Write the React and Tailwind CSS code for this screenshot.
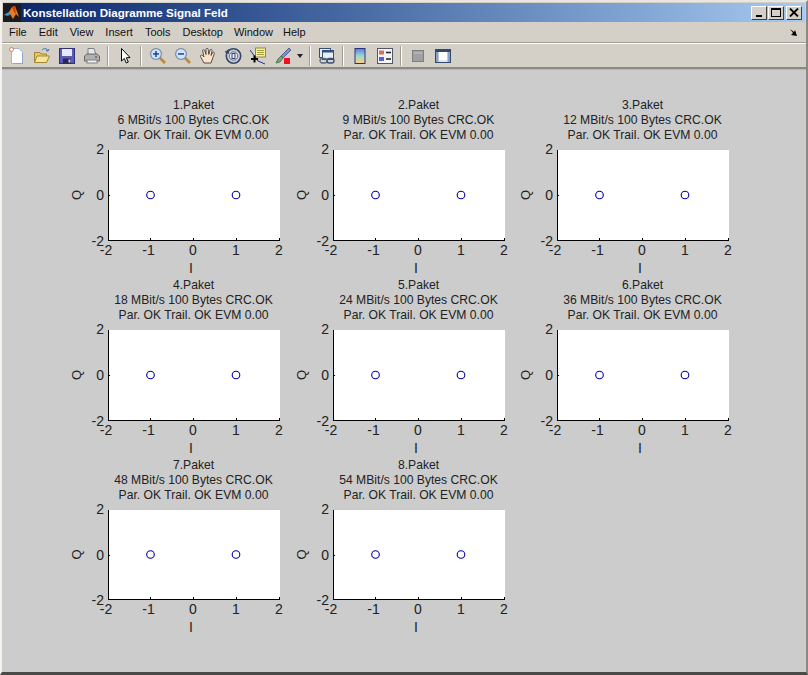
const plots = [
  ["1.Paket", "6 MBit/s 100 Bytes CRC.OK"],
  ["2.Paket", "9 MBit/s 100 Bytes CRC.OK"],
  ["3.Paket", "12 MBit/s 100 Bytes CRC.OK"],
  ["4.Paket", "18 MBit/s 100 Bytes CRC.OK"],
  ["5.Paket", "24 MBit/s 100 Bytes CRC.OK"],
  ["6.Paket", "36 MBit/s 100 Bytes CRC.OK"],
  ["7.Paket", "48 MBit/s 100 Bytes CRC.OK"],
  ["8.Paket", "54 MBit/s 100 Bytes CRC.OK"],
];

function Axes({ h }) {
  const top = 7;
  const bottom = top + h;
  const mid = top + h / 2;
  const left = 38;
  const xTicks = [
    [left, "-2", left - 2],
    [left + 42.5, "-1", left + 40.5],
    [left + 85, "0", left + 85],
    [left + 128, "1", left + 128],
    [left + 171, "2", left + 171],
  ];
  const tick = { stroke: "#000", strokeWidth: 1, shapeRendering: "crispEdges" };
  const txt = { fontFamily: "'Liberation Sans', Arial, sans-serif", fontSize: 14, fill: "#222" };
  return (
    <svg width="224" height="135" className="block overflow-visible">
      <rect x={left + 1} y={top} width="171" height={h} fill="#fff" />
      <line x1={left + 0.5} y1={top} x2={left + 0.5} y2={bottom + 0.5} {...tick} />
      <line x1={left} y1={bottom + 0.5} x2={left + 172} y2={bottom + 0.5} {...tick} />
      <line x1={left} y1={mid + 0.5} x2={left + 2} y2={mid + 0.5} {...tick} />
      {xTicks.map(([x]) => (
        <line key={x} x1={Math.floor(x) + 0.5} y1={bottom} x2={Math.floor(x) + 0.5} y2={bottom - 2} {...tick} />
      ))}
      {xTicks.map(([x, t, tx]) => (
        <text key={t} x={tx} y={bottom + 15} textAnchor="middle" {...txt}>{t}</text>
      ))}
      <text x={left - 4} y={top + 4} textAnchor="end" {...txt}>2</text>
      <text x={left - 4} y={mid + 5} textAnchor="end" {...txt}>0</text>
      <text x={left - 4} y={bottom + 6} textAnchor="end" {...txt}>-2</text>
      <text transform={`translate(11 ${mid}) rotate(-90)`} textAnchor="middle" fontFamily="'Liberation Sans', Arial, sans-serif" fontSize="13" fill="#222">Q</text>
      <text x={left + 83} y={bottom + 33} textAnchor="middle" {...txt}>I</text>
      <circle cx={left + 42.5} cy={mid} r="3.8" fill="none" stroke="#0000a8" strokeWidth="1.1" />
      <circle cx={left + 128} cy={mid} r="3.8" fill="none" stroke="#0000a8" strokeWidth="1.1" />
    </svg>
  );
}

function Plot({ title, line, h }) {
  return (
    <div className="h-[180px]">
      <div className="ml-[39px] flex w-[169px] flex-col items-center whitespace-nowrap text-[12.15px] leading-[15px] text-[#222]">
        <div>{title}</div>
        <div>{line}</div>
        <div>Par. OK Trail. OK EVM 0.00</div>
      </div>
      <Axes h={h} />
    </div>
  );
}

const Sep = ({ cls }) => (
  <div className={`h-[20px] w-[2px] border-l border-r border-l-[#a09c94] border-r-white ${cls}`} />
);
const Btn = ({ children }) => (
  <div className="flex h-[24px] w-[25px] shrink-0 items-center justify-center">
    <svg width="18" height="18" viewBox="0 0 18 18">{children}</svg>
  </div>
);

const Zoom = ({ plus }) => (
  <>
    <line x1="10" y1="10" x2="16" y2="16" stroke="#b98a3a" strokeWidth="2.6" />
    <circle cx="7" cy="7" r="5.4" fill="#cfe6f8" stroke="#7a8aa8" strokeWidth="1.2" />
    <rect x="4" y="6.2" width="6" height="1.5" fill="#1c3fa8" />
    {plus && <rect x="6.2" y="4" width="1.5" height="6" fill="#1c3fa8" />}
  </>
);

export default function App() {
  return (
    <div className="flex h-[675px] w-[808px] flex-col overflow-hidden border-t-2 border-l-2 border-r-2 border-b-[3px] border-t-[#e8e6e0] border-l-[#f4f2ec] border-r-[#8a8882] border-b-[#4a4a48] bg-[#d4d0c8] font-['Liberation_Sans',Arial,sans-serif]">
      <div className="mx-px mt-px flex h-[19px] shrink-0 items-center bg-gradient-to-r from-[#0a246a] to-[#a6caf0] pr-[3px]">
        <svg width="18" height="18" viewBox="0 0 18 18" className="shrink-0 bg-[#1a1a20]">
          <path d="M1 11 L6 8 L9 3 L12 2 L16 13 L13 10 L10 15 L7 10 Z" fill="#e8801c" />
          <path d="M1 11 L6 8 L8 10 L5 12 Z" fill="#3f8fd0" />
          <path d="M9 3 L12 2 L13 10 L11 8 Z" fill="#c8401a" />
        </svg>
        <span className="ml-[2px] whitespace-nowrap text-[11.6px] font-bold text-white">Konstellation Diagramme Signal Feld</span>
        <div className="ml-auto flex items-center">
          <div className="flex h-[14px] w-[16px] items-end justify-start border border-t-white border-l-white border-r-[#404040] border-b-[#404040] bg-[#d4d0c8] pb-[2px] pl-[4px]">
            <div className="h-[2px] w-[6px] bg-black" />
          </div>
          <div className="ml-px flex h-[14px] w-[16px] items-center justify-center border border-t-white border-l-white border-r-[#404040] border-b-[#404040] bg-[#d4d0c8]">
            <div className="h-[9px] w-[10px] border border-t-2 border-black" />
          </div>
          <div className="ml-[2px] flex h-[14px] w-[16px] items-center justify-center border border-t-white border-l-white border-r-[#404040] border-b-[#404040] bg-[#d4d0c8]">
            <svg width="10" height="9" viewBox="0 0 10 9">
              <path d="M1 0.5 L9 8.5 M9 0.5 L1 8.5" stroke="#000" strokeWidth="1.8" />
            </svg>
          </div>
        </div>
      </div>

      <div className="flex h-[21px] shrink-0 items-center gap-[12px] border-b border-b-[#a09c94] pl-[7px] pr-[5px] text-[11px] text-[#111]">
        <span>File</span>
        <span>Edit</span>
        <span>View</span>
        <span>Insert</span>
        <span>Tools</span>
        <span>Desktop</span>
        <span className="-ml-px">Window</span>
        <span className="-ml-[2px]">Help</span>
        <svg width="9" height="9" viewBox="0 0 9 9" className="ml-auto mr-[3px]">
          <path d="M1 1 L5 4 L6 2 L8 8 L2 7 L4 5 Z" fill="#000" />
        </svg>
      </div>

      <div className="flex h-[26px] shrink-0 items-center border-t border-t-white border-b-2 border-b-[#8c8a84] pl-[2px]">
        <Btn>
          <path d="M3.5 1.5 H11 L14.5 5 V16.5 H3.5 Z" fill="#fff" stroke="#9fb8d8" />
          <path d="M14 16 V6 L15 6 V17 H5 V16 Z" fill="#8fa8c8" />
          <circle cx="3.5" cy="2.5" r="2" fill="#fff" stroke="#e07a50" />
        </Btn>
        <Btn>
          <path d="M1.5 5.5 H7 L8 7 H13.5 V15.5 H1.5 Z" fill="#e8c860" stroke="#a08838" />
          <path d="M1.5 15.5 L4 9 H16.5 L13.5 15.5 Z" fill="#f8e498" stroke="#a08838" />
          <path d="M9 3 C11 1 14 1 15 4 M15 4 L13 3.5 M15 4 L16 2" stroke="#3a6ea8" fill="none" />
        </Btn>
        <Btn>
          <rect x="1.5" y="1.5" width="15" height="15" fill="#5a5ab8" stroke="#30307a" />
          <rect x="4" y="2" width="10" height="7" fill="#e8e8f8" />
          <rect x="5" y="11.5" width="8" height="5" fill="#282858" />
          <rect x="10.5" y="12.5" width="2" height="3" fill="#c8c8e0" />
        </Btn>
        <Btn>
          <path d="M5 1.5 H11 L13 8 H5 Z" fill="#e8e8e8" stroke="#808080" />
          <path d="M1.5 9 L4 7 H14 L16.5 9 V14 H1.5 Z" fill="#b0b0b0" stroke="#686868" />
          <rect x="4" y="13" width="10" height="3" fill="#f0f0f0" stroke="#808080" />
          <rect x="12" y="9.5" width="2" height="1" fill="#404040" />
        </Btn>
        <Sep cls="ml-[3px] mr-[3px]" />
        <Btn>
          <path d="M5.5 1.5 V14 L8.3 11.5 L10.3 16 L12.3 15 L10.3 10.8 L14 10.5 Z" fill="#fff" stroke="#000" strokeWidth="1" />
        </Btn>
        <Sep cls="ml-[3px] mr-[3px]" />
        <Btn><Zoom plus /></Btn>
        <Btn><Zoom /></Btn>
        <Btn>
          <path d="M5 16 L1.5 9.5 C1 8 3 7.5 4 9 L5 10 L3.6 3.8 C3.4 2.4 5.2 2.2 5.7 3.6 L7 7.5 L7 2.4 C7 1 9 1 9.2 2.4 L9.8 7.5 L11 3 C11.4 1.8 13.2 2.2 13 3.6 L12 8.5 L13.6 5.6 C14.3 4.6 15.9 5.3 15.3 6.7 L13 13 L12 16 Z" fill="#f8e4cc" stroke="#4a4038" strokeWidth="0.9" />
        </Btn>
        <Btn>
          <circle cx="9.5" cy="9" r="7.2" fill="#c8ccd8" stroke="#38486a" strokeWidth="1.6" />
          <circle cx="9.5" cy="9" r="4.2" fill="#e8e8ee" stroke="#68708a" />
          <rect x="8" y="6.5" width="3" height="5" fill="none" stroke="#38486a" />
          <path d="M0.5 5 L5 2 L5 7 Z" fill="#38486a" />
        </Btn>
        <Btn>
          <rect x="6.5" y="1" width="10" height="9" fill="#f8f098" stroke="#8a8a40" />
          <path d="M8 3.5 H15 M8 5.5 H15 M8 7.5 H15" stroke="#a0a040" />
          <path d="M1 3 L9 14 L16 17" stroke="#2030a0" fill="none" />
          <path d="M2 12 H9 M5.5 8.5 V15.5" stroke="#000" strokeWidth="2" />
        </Btn>
        <Btn>
          <path d="M15 1 L17 3 L9 11 L7 9 Z" fill="#7890d0" stroke="#384878" strokeWidth="0.7" />
          <path d="M7 9 L9 11 L6 15 L2 16 L4 12 Z" fill="#78a878" stroke="#385838" strokeWidth="0.7" />
          <rect x="10" y="11" width="6" height="6" fill="#f01020" />
        </Btn>
        <div className="flex w-[10px] shrink-0 justify-center">
          <div className="h-0 w-0 border-x-[3px] border-t-[4px] border-x-transparent border-t-[#222]" />
        </div>
        <Sep cls="ml-[4px] mr-[3px]" />
        <Btn>
          <rect x="1.5" y="1.5" width="11" height="9" fill="#e8eef8" stroke="#34507a" />
          <rect x="4.5" y="3.5" width="11" height="9" fill="#e8eef8" stroke="#34507a" />
          <rect x="4.5" y="3.5" width="11" height="2" fill="#34507a" />
          <rect x="2" y="11.5" width="7" height="4.5" rx="2.2" fill="none" stroke="#5a6a88" strokeWidth="1.3" />
          <rect x="9" y="11.5" width="7" height="4.5" rx="2.2" fill="none" stroke="#34507a" strokeWidth="1.3" />
        </Btn>
        <Sep cls="ml-[3px] mr-[3px]" />
        <Btn>
          <defs>
            <linearGradient id="cb" x1="0" y1="0" x2="0" y2="1">
              <stop offset="0" stopColor="#5080e0" />
              <stop offset="0.5" stopColor="#a0d8d0" />
              <stop offset="1" stopColor="#f8d080" />
            </linearGradient>
          </defs>
          <rect x="4" y="1.5" width="10" height="15" fill="url(#cb)" stroke="#30307a" />
        </Btn>
        <Btn>
          <rect x="1.5" y="1.5" width="15" height="15" fill="#f4f4f4" stroke="#505868" />
          <rect x="3" y="3.5" width="5" height="4" fill="#d87060" />
          <rect x="3" y="10" width="5" height="4" fill="#5860d0" />
          <path d="M10 5.5 H15 M10 12 H15" stroke="#202020" strokeWidth="1.4" />
        </Btn>
        <Sep cls="ml-[3px] mr-[3px]" />
        <Btn>
          <rect x="3.5" y="3.5" width="11" height="11" fill="#a0a0a0" stroke="#808080" />
          <rect x="5" y="5" width="8" height="2" fill="#b4b4b4" />
        </Btn>
        <Btn>
          <rect x="1.5" y="2.5" width="15" height="13" fill="#dfe6f4" stroke="#34486a" />
          <rect x="2" y="3" width="14" height="2" fill="#34486a" />
          <rect x="4.5" y="5" width="9" height="8" fill="#fff" />
          <rect x="2" y="5" width="2.5" height="10" fill="#8aa0c4" />
          <rect x="13.5" y="5" width="2.5" height="10" fill="#8aa0c4" />
        </Btn>
      </div>

      <div className="grow border-t border-t-[#b8b6b0] bg-[#cccccc] pl-[68px] pt-[28px]">
        <div className="grid grid-cols-[225px_224px_225px]">
          {plots.map(([t, l], i) => (
            <Plot key={t} title={t} line={l} h={i >= 6 ? 89 : 90} />
          ))}
        </div>
      </div>
    </div>
  );
}
